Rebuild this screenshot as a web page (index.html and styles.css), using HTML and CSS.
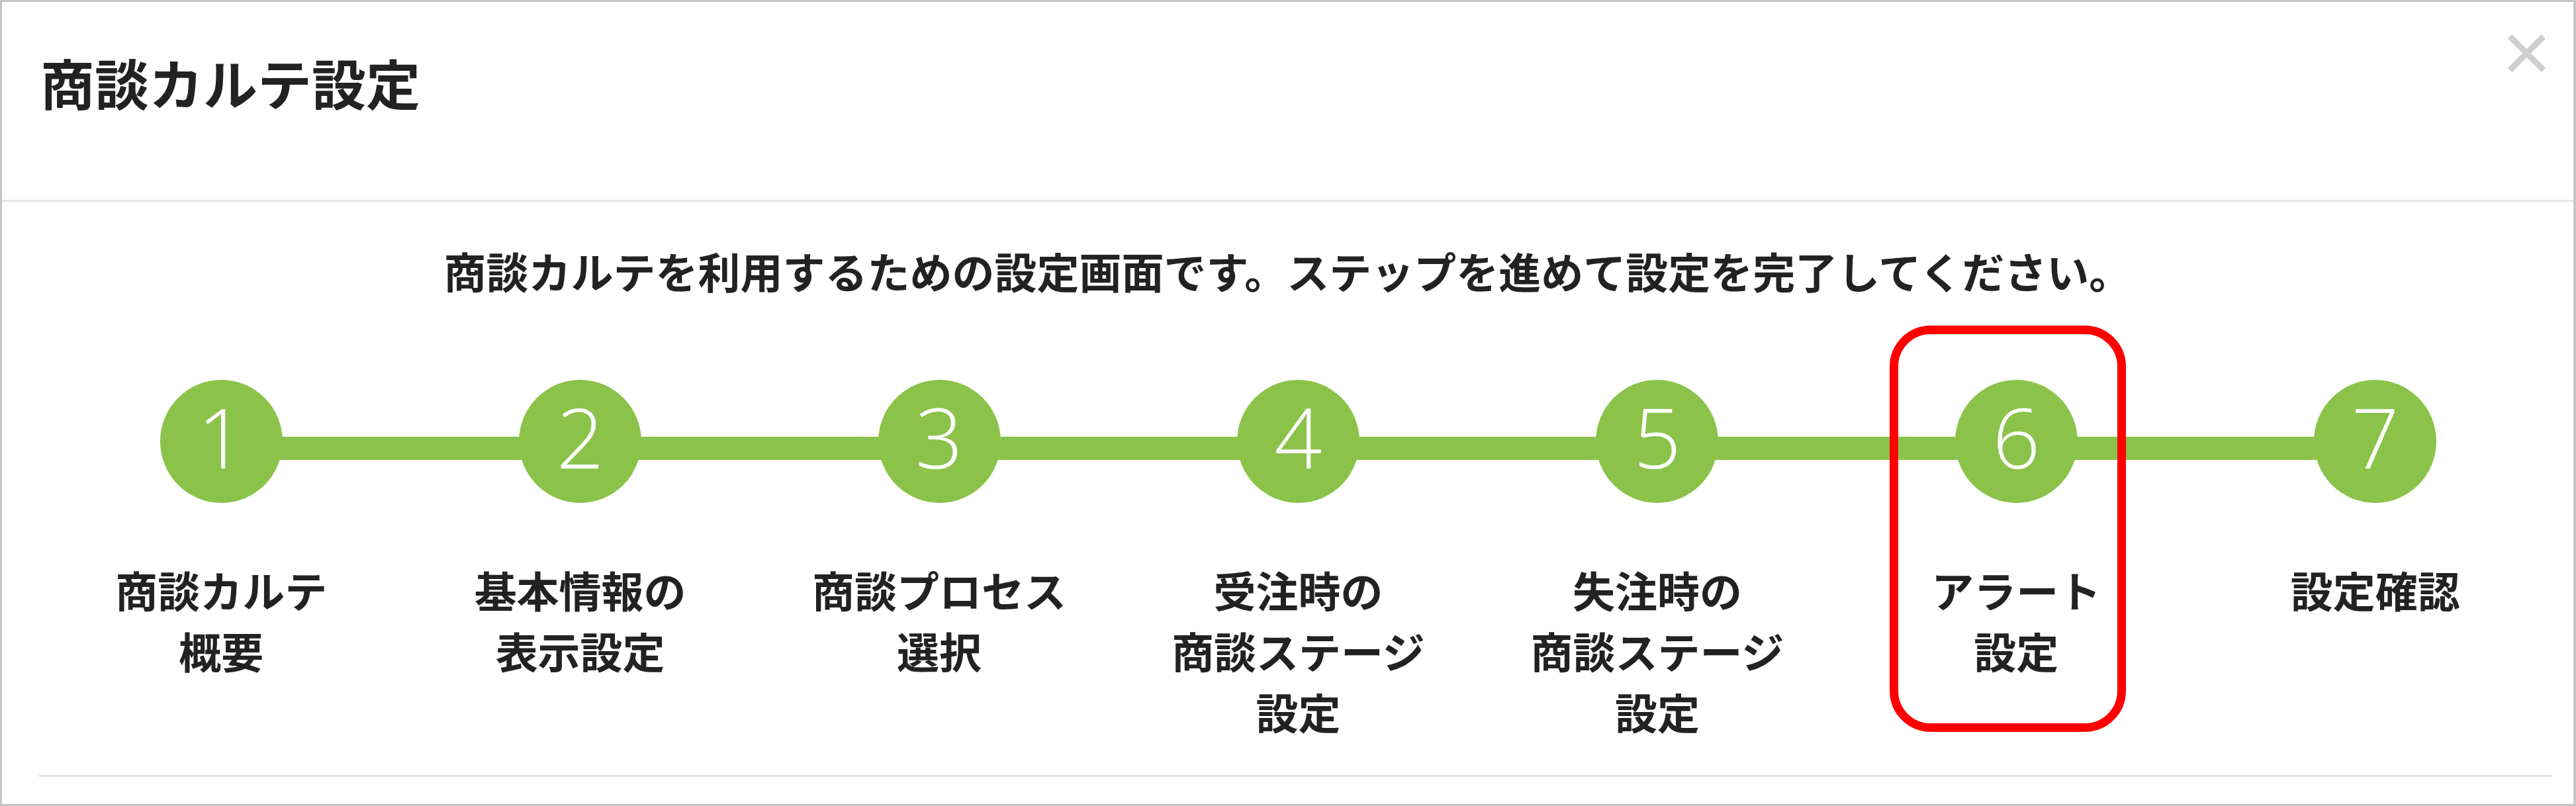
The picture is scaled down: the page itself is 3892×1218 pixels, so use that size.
FILE: index.html
```html
<!DOCTYPE html>
<html lang="ja">
<head>
    <meta charset="UTF-8">
    <meta name="viewport" content="width=device-width, initial-scale=1.0">
    <title>商談カルテ設定</title>
    <link rel="stylesheet" href="styles.css">
</head>
<body>
    <div class="modal">
        <header class="modal-head">
            <h1 class="tit-modal">商談カルテ設定</h1>
            <button class="btn-close" type="button" aria-label="閉じる">
                <svg width="59" height="57" viewBox="0 0 59 57">
                    <path d="M4 3 L55 54 M55 3 L4 54" stroke="#cfcfcf" stroke-width="9" fill="none"/>
                </svg>
            </button>
        </header>
        <section class="modal-body">
            <p class="guide">商談カルテを利用するための設定画面です。ステップを進めて設定を完了してください。</p>
            <ol class="steps">
                <li class="step">
                    <span class="step-num">1</span>
                    <p class="step-label">商談カルテ<br>概要</p>
                </li>
                <li class="step">
                    <span class="step-num">2</span>
                    <p class="step-label">基本情報の<br>表示設定</p>
                </li>
                <li class="step">
                    <span class="step-num">3</span>
                    <p class="step-label">商談プロセス<br>選択</p>
                </li>
                <li class="step">
                    <span class="step-num">4</span>
                    <p class="step-label">受注時の<br>商談ステージ<br>設定</p>
                </li>
                <li class="step">
                    <span class="step-num">5</span>
                    <p class="step-label">失注時の<br>商談ステージ<br>設定</p>
                </li>
                <li class="step is-marked">
                    <span class="step-num">6</span>
                    <p class="step-label">アラート<br>設定</p>
                </li>
                <li class="step">
                    <span class="step-num">7</span>
                    <p class="step-label">設定確認</p>
                </li>
            </ol>
            <div class="divide"></div>
        </section>
    </div>
</body>
</html>
```

FILE: styles.css
```css
html {
    background: #fff;
}
body {
    margin: 0;
    font-family: "Noto Sans CJK JP", "Noto Sans", sans-serif;
    color: #222;
}
.modal {
    box-sizing: border-box;
    width: 3892px;
    height: 1218px;
    border: 3px solid #c6c6c6;
    border-right-width: 4px;
    background: #fff;
    overflow: hidden;
}
.modal-head {
    box-sizing: border-box;
    height: 302px;
    display: flex;
    justify-content: space-between;
    align-items: flex-start;
    padding: 49px 41px 0 58px;
    border-bottom: 3px solid #e6e6e6;
}
.tit-modal {
    margin: 31px 0 0;
    font-size: 82px;
    font-weight: 700;
    line-height: 1;
    color: #222;
}
.btn-close {
    padding: 0;
    border: 0;
    background: none;
    line-height: 0;
    cursor: pointer;
}
.guide {
    margin: 71px 0 0;
    font-size: 64px;
    font-weight: 700;
    line-height: 1;
    text-align: center;
}
/* 7 columns, the green bar runs from the first circle to the last */
.steps {
    list-style: none;
    margin: 134px 28px 0 60px;
    padding: 0;
    display: grid;
    grid-template-columns: repeat(7, 1fr);
    background-image: linear-gradient(#8bc34a, #8bc34a);
    background-repeat: no-repeat;
    background-size: calc(100% * 6 / 7) 35px;
    background-position: 50% 86px;
}
.step {
    position: relative;
    display: flex;
    flex-direction: column;
    align-items: center;
}
.step-num {
    box-sizing: border-box;
    width: 185px;
    height: 186px;
    padding-bottom: 16px;
    display: flex;
    justify-content: center;
    align-items: center;
    border-radius: 50%;
    background: #8bc34a;
    color: #fff;
    font-family: "Open Sans", "Noto Sans", sans-serif;
    font-weight: 300;
    font-size: 126px;
    line-height: 1;
}
.step-label {
    margin: 84px 0 0;
    font-size: 64px;
    font-weight: 700;
    line-height: 92px;
    text-align: center;
}
/* red frame drawn over the step in focus */
.step.is-marked::after {
    content: "";
    position: absolute;
    left: 80px;
    top: -82px;
    box-sizing: border-box;
    width: 357px;
    height: 614px;
    border: 13px solid #ff0000;
    border-radius: 62px;
}
.divide {
    margin: 51px 32px 0 56px;
    height: 3px;
    background: #e2e2e2;
}
```
